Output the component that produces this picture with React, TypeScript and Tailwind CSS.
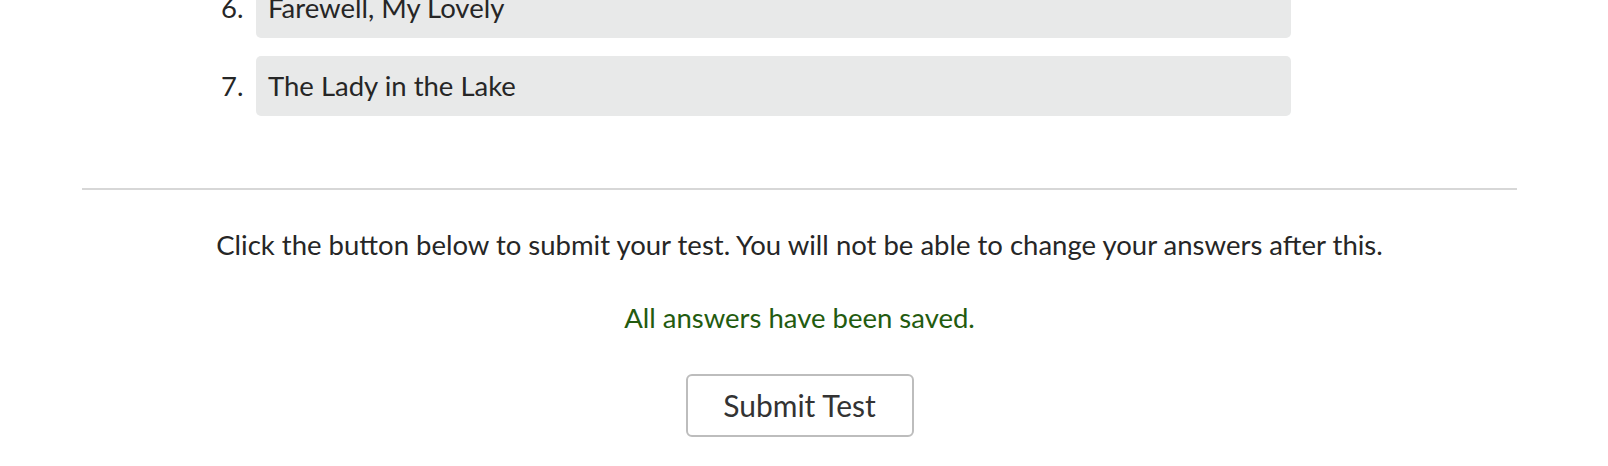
import React from 'react';

const items = [
  { n: 6, title: 'Farewell, My Lovely' },
  { n: 7, title: 'The Lady in the Lake' },
];

export default function App() {
  return (
    <div className="w-[1608px] h-[466px] overflow-hidden bg-white font-['Lato','Noto_Sans',sans-serif] text-[#262626]">
      <div className="ml-[82px] w-[1435px] -mt-[22px]">
        {/* remaining ordering answers */}
        <ol className="flex flex-col gap-[18px] pl-[174px]">
          {items.map((it) => (
            <li key={it.n} className="flex items-center">
              <span className="w-[35px] -ml-[35px] text-[27.5px] leading-none">{it.n}.</span>
              <div className="flex h-[60px] w-[1035px] items-center rounded-[5px] bg-[#e8e9e9] px-[12px] text-[27.5px]">
                {it.title}
              </div>
            </li>
          ))}
        </ol>

        {/* submit section */}
        <div className="mt-[72px] border-t-2 border-[#d7d7d7] pt-[34px] text-center">
          <p className="text-[27.5px] leading-[42px]">
            Click the button below to submit your test. You will not be able to change your answers after this.
          </p>
          <p className="mt-[31px] text-[27.5px] leading-[42px] text-[#235b0f]">All answers have been saved.</p>
          <button className="mt-[35px] h-[63px] w-[228px] rounded-[6px] border-2 border-[#bdbdbd] bg-white text-[30px] text-[#333]">
            Submit Test
          </button>
        </div>
      </div>
    </div>
  );
}
